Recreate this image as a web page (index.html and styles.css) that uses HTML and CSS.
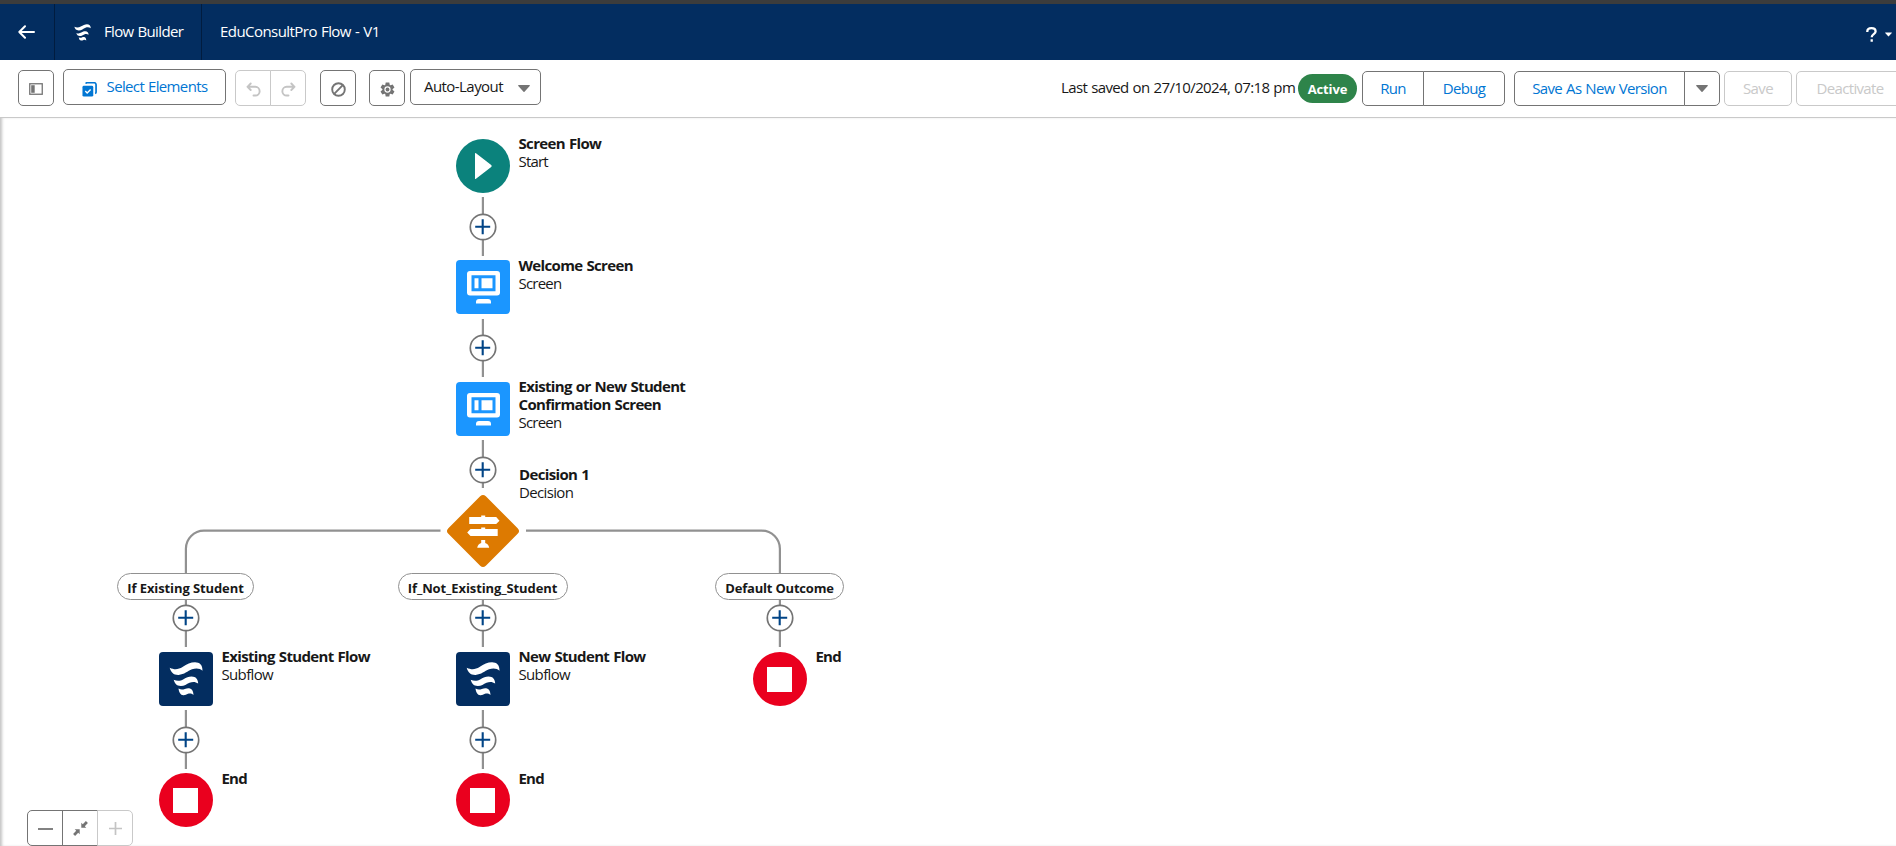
FILE: index.html
```html
<!DOCTYPE html>
<html lang="en">
<head>
<meta charset="utf-8">
<title>Flow Builder</title>
<link rel="stylesheet" href="styles.css">
</head>
<body>
<svg class="defs" aria-hidden="true">
  <symbol id="flow" viewBox="0 0 54 54">
    <path fill="#fff" d="M10.700 15.700C15.500 18 19.500 17.500 23.500 15C28 12.200 31.500 10.300 36 10.300C40.500 10.400 43.500 12.500 43.500 18.700C41 16.300 37 15.900 33 17.300C28.500 19 25.500 22.600 19.500 22.900C14.500 23 12 20.500 10.700 15.700z"/>
    <path fill="#fff" d="M14.700 27.800C18.500 29.500 21.500 29 24.500 27.200C27.500 25.400 29.500 24.400 32.500 24.400C37 24.500 39 27 39.200 31.600C36.500 29.600 33.500 29.600 30.500 30.800C27.500 32.200 25.500 34 21.800 34C17.500 33.900 15.700 31.600 14.700 27.800z"/>
    <path fill="#fff" d="M19.500 36.500C22 37.900 23.800 37.700 25.800 36.900C27.500 36.300 28.500 36.100 30 36.200C33 36.500 34.300 39 34.500 43C32.500 41.300 30.800 41.200 29 41.800C27.300 42.500 26.300 43.300 24.300 43.200C21.500 43 20 40.500 19.500 36.500z"/>
  </symbol>
  <symbol id="screen" viewBox="0 0 54 54">
    <path fill="#fff" fill-rule="evenodd" d="M14 11h27a3 3 0 0 1 3 3v18.500a3 3 0 0 1-3 3H14a3 3 0 0 1-3-3V14a3 3 0 0 1 3-3zm1.500 4.200v16h24v-16zM18.500 18.200h4v10h-4zM25.500 18.200h11v10h-11zM23 39h9a3 3 0 0 1 3 3v1.500H20V42a3 3 0 0 1 3-3z"/>
  </symbol>
  <symbol id="plus" viewBox="0 0 28 28">
    <circle cx="14" cy="14" r="12.700" fill="#fff" stroke="#747474" stroke-width="1.700"/>
    <path d="M13.700 6.200v15M6.200 13.700h15" stroke="#014486" stroke-width="2.100"/>
  </symbol>
  <symbol id="caret" viewBox="0 0 12 7"><path d="M.8 0h10.400a.6.600 0 0 1 .5 1L6.500 6.700a.7.700 0 0 1-1 0L.3 1A.6.600 0 0 1 .8 0z" fill="currentColor"/></symbol>
</svg>

<header class="topbar">
  <div class="back"><svg width="18" height="14" viewBox="0 0 18 14" fill="none" stroke="#fff" stroke-width="2" stroke-linecap="round" stroke-linejoin="round"><path d="M7 1.200 1.300 7 7 12.800M1.300 7H16"/></svg></div>
  <div class="brand"><svg width="27" height="27"><use href="#flow"/></svg><span>Flow Builder</span></div>
  <div class="title"><span>EduConsultPro Flow - V1</span></div>
  <div class="help"><svg width="11" height="15" viewBox="0 0 11 15" fill="none" stroke="#fff" stroke-width="2.300"><path d="M1.300 5V4.600C1.300 2.500 3 1.200 5.400 1.200s4.200 1.300 4.200 3.300c0 2.700-3.900 2.700-3.900 5.700M5.700 12.300v2.500"/></svg><svg width="7" height="5"><use href="#caret"/></svg></div>
</header>

<nav class="toolbar">
  <div class="tools">
    <button class="btn icon panel"><svg width="14" height="12" viewBox="0 0 14 12"><rect x=".75" y=".75" width="12.500" height="10.500" fill="none" stroke="#747474" stroke-width="1.300"/><path d="M2.200 2.200h3.500v7.600H2.200z" fill="#747474"/></svg></button>
    <button class="btn select"><svg width="15" height="15" viewBox="0 0 16 16"><path d="M4 1.700A1.500 1.500 0 0 1 5.500.8H13a2 2 0 0 1 2 2v8a1.500 1.500 0 0 1-1 1.500" fill="none" stroke="#0176d3" stroke-width="1.800"/><rect x=".5" y="4" width="11.500" height="11.500" rx="1.500" fill="#0176d3"/><path d="m3.500 9.700 2 2 3.700-3.700" fill="none" stroke="#fff" stroke-width="1.500"/></svg><span>Select Elements</span></button>
    <div class="group disabled undo">
      <button class="btn icon"><svg width="15" height="15" viewBox="0 0 15 15" fill="none" stroke="#c4c4c4" stroke-width="1.900" stroke-linecap="round" stroke-linejoin="round"><path d="M4.700 1.500 1.500 4.800 4.700 8M1.500 4.800h7.800a4.300 4.300 0 0 1 0 8.700H7.500"/></svg></button>
      <button class="btn icon"><svg width="15" height="15" viewBox="0 0 15 15" fill="none" stroke="#c4c4c4" stroke-width="1.900" stroke-linecap="round" stroke-linejoin="round"><path d="m10.300 1.500 3.200 3.300L10.300 8M13.500 4.800H5.700a4.300 4.300 0 0 0 0 8.700h1.800"/></svg></button>
    </div>
    <button class="btn icon ban"><svg width="15" height="15" viewBox="0 0 15 15" fill="none" stroke="#747474" stroke-width="1.900"><circle cx="7.500" cy="7.500" r="6.300"/><path d="M3.200 11.800 11.800 3.200"/></svg></button>
    <button class="btn icon gear"><svg width="15" height="15" viewBox="0 0 15 15"><g fill="#747474"><path d="M5.700.5h3.600l.7 3.700H5zM5 10.800h5l-.7 3.700H5.700z"/><path d="M5.700.5h3.600l.7 3.700H5zM5 10.800h5l-.7 3.700H5.700z" transform="rotate(60 7.500 7.500)"/><path d="M5.700.5h3.600l.7 3.700H5zM5 10.800h5l-.7 3.700H5.700z" transform="rotate(120 7.500 7.500)"/></g><circle cx="7.500" cy="7.500" r="4" fill="#fff" stroke="#747474" stroke-width="1.700"/><circle cx="7.500" cy="7.500" r="1.900" fill="#747474"/></svg></button>
    <button class="btn combo"><span>Auto-Layout</span><svg class="caret" width="12" height="7"><use href="#caret"/></svg></button>
  </div>
  <div class="actions">
    <span class="saved">Last saved on 27/10/2024, 07:18 pm</span>
    <span class="badge">Active</span>
    <div class="group run"><button class="btn link w-run">Run</button><button class="btn link w-debug">Debug</button></div>
    <div class="group save-as"><button class="btn link w-version">Save As New Version</button><button class="btn w-more"><svg class="caret" width="12" height="7"><use href="#caret"/></svg></button></div>
    <button class="btn off w-save">Save</button>
    <button class="btn off w-deactivate">Deactivate</button>
  </div>
</nav>

<main class="canvas">
  <svg class="wires" width="900" height="728" viewBox="0 118 900 728" fill="none" stroke="#919191" stroke-width="2.200">
    <path d="M482.900 197v59M482.900 319v58M482.900 440v48M482.900 600v47M482.900 710v59M185.900 600v47M185.900 710v59M779.900 600v47M440.500 530.700H203.900a18 18 0 0 0-18 18V573M526 530.700h235.900a18 18 0 0 1 18 18V573"/>
  </svg>
  <div class="node start"><svg class="shape circle" viewBox="0 0 54 54"><path d="M19 14.800v24.600q0 1.200 1 .4l15.200-11.700q1.100-1 0-2L20 14.300q-1-.7-1 .5z" fill="#fff"/></svg><div class="label"><b>Screen Flow</b><span class="tight">Start</span></div></div>
  <div class="node welcome"><svg class="shape"><use href="#screen"/></svg><div class="label"><b>Welcome Screen</b><span class="tight">Screen</span></div></div>
  <div class="node confirm"><svg class="shape"><use href="#screen"/></svg><div class="label"><b>Existing or New Student</b><b>Confirmation Screen</b><span class="tight">Screen</span></div></div>
  <svg class="diamond" width="74" height="74" viewBox="0 0 74 74"><rect x="10.500" y="10.500" width="53" height="53" rx="4" transform="rotate(45 37 37)" fill="#dd7a01"/><path fill="#fff" d="M23.200 23h12v-1.500h4V23h11l3.300 3.700-3.300 3.300h-27zM24.500 35h10.700v-1.500h4V35h12.500v7H24.500L21.200 38.500zM35.200 46h4v3q3.500 1.200 4 4.800h-12q.5-3.600 4-4.800z"/></svg>
  <div class="label decision"><b>Decision 1</b><span>Decision</span></div>
  <div class="pill p1">If Existing Student</div>
  <div class="pill p2">If_Not_Existing_Student</div>
  <div class="pill p3">Default Outcome</div>
  <div class="node sub1"><svg class="shape navy"><use href="#flow"/></svg><div class="label"><b>Existing Student Flow</b><span>Subflow</span></div></div>
  <div class="node sub2"><svg class="shape navy"><use href="#flow"/></svg><div class="label"><b>New Student Flow</b><span>Subflow</span></div></div>
  <div class="node end1"><div class="shape stop"></div><div class="label"><b class="tight">End</b></div></div>
  <div class="node end2"><div class="shape stop"></div><div class="label"><b class="tight">End</b></div></div>
  <div class="node end3"><div class="shape stop"></div><div class="label"><b class="tight">End</b></div></div>
  <svg class="add a1"><use href="#plus"/></svg>
  <svg class="add a2"><use href="#plus"/></svg>
  <svg class="add a3"><use href="#plus"/></svg>
  <svg class="add a4"><use href="#plus"/></svg>
  <svg class="add a5"><use href="#plus"/></svg>
  <svg class="add a6"><use href="#plus"/></svg>
  <svg class="add a7"><use href="#plus"/></svg>
  <svg class="add a8"><use href="#plus"/></svg>
  <div class="zoom group">
    <button class="btn"><svg width="15" height="15" stroke="#747474" stroke-width="1.800"><path d="M0 8h15"/></svg></button>
    <button class="btn"><svg width="15" height="15" viewBox="0 0 15 15" fill="#747474"><path d="M8.300 1.700 9.800 3.200 12.900.1l2 2L11.800 5.200l1.500 1.500h-5zM6.700 8.300v5L5.200 11.800l-3.100 3.100-2-2L3.200 9.800 1.700 8.300z"/></svg></button>
    <button class="btn"><svg width="15" height="15" stroke="#c4c4c4" stroke-width="1.700"><path d="M1 7.500h13M7.500 1v13"/></svg></button>
  </div>
</main>
</body>
</html>
```
FILE: styles.css
```css
* { box-sizing: border-box; }
body { margin: 0; width: 1896px; height: 846px; overflow: hidden; background: #fff; color: #181818; font: 15px/18px "Open Sans", "Noto Sans", sans-serif; letter-spacing: -.65px; word-spacing: .7px; }
button { font: inherit; color: inherit; letter-spacing: inherit; word-spacing: inherit; }
.defs { display: none; }

/* Header */
.topbar { height: 60px; border-top: 4px solid #3c3c3c; background: #032d60; color: #fff; display: flex; align-items: stretch; }
.topbar > div { display: flex; align-items: center; }
.topbar span { padding-bottom: 2px; }
.back { width: 55px; padding-left: 18px; border-right: 1px solid #011c3f; }
.brand { width: 147px; padding-left: 14px; gap: 8px; border-right: 1px solid #011c3f; }
.brand svg { flex: none; }
.title { padding-left: 18px; flex: 1; letter-spacing: -.55px; }
.topbar .help { padding: 4px 4px 0 0; gap: 8px; }

/* Toolbar */
.toolbar { height: 58px; border-bottom: 1px solid #c9c9c9; display: flex; justify-content: space-between; }
.tools, .actions { display: flex; align-items: flex-start; flex: none; }
.btn { height: 36px; padding: 0; border: 1px solid #747474; border-radius: 5px; background: #fff; display: flex; align-items: center; justify-content: center; flex: none; white-space: nowrap; }
.icon { width: 36px; margin-top: 10px; padding-top: 2px; }
.group { display: flex; flex: none; }
.group .btn { border-radius: 0; }
.group .btn + .btn { margin-left: -1px; }
.group .btn:first-child { border-radius: 5px 0 0 5px; }
.group .btn:last-child { border-radius: 0 5px 5px 0; }
.disabled .btn { border-color: #c9c9c9; }
.panel { margin-left: 18px; }
.select { width: 163px; margin: 9px 0 0 9px; gap: 10px; color: #0176d3; }
.select svg { margin-top: 4px; }
.select span, .combo span { padding-bottom: 2px; }
.undo { margin-left: 9px; }
.ban { margin-left: 14px; }
.gear { margin-left: 13px; }
.combo { width: 131px; margin: 9px 0 0 5px; gap: 15px; padding-left: 3px; letter-spacing: -.55px; }
.combo .caret { margin-top: 3px; }
.caret { color: #747474; }
.actions { width: 835px; }
.actions .btn { height: 35px; padding-bottom: 1px; }
.saved { margin-top: 18px; width: 237px; flex: none; white-space: nowrap; letter-spacing: -.62px; }
.badge { width: 59px; height: 29px; flex: none; margin-top: 14px; padding-top: 1px; border-radius: 15px; background: #2e844a; color: #fff; font-size: 13px; font-weight: 700; letter-spacing: -.1px; display: flex; align-items: center; justify-content: center; }
.run { margin: 11px 0 0 5px; }
.save-as { margin: 11px 0 0 9px; }
.link { color: #0176d3; }
.w-run { width: 62px; }
.w-debug { width: 82px; }
.w-version { width: 171px; }
.w-more { width: 36px; }
.off { color: #c9c9c9; border-color: #c9c9c9; margin-top: 11px; }
.w-save { width: 68px; margin-left: 4px; }
.w-deactivate { width: 108px; margin-left: 4px; }

/* Flow canvas */
.canvas { position: relative; height: 728px; box-shadow: inset 3px 0 3px -1px #c4c4c4; }
.wires { position: absolute; left: 0; top: 0; }
.node { position: absolute; display: flex; gap: 9px; }
.shape { width: 54px; height: 54px; border-radius: 4px; background: #1b96ff; flex: none; margin-top: 5px; }
.circle { border-radius: 50%; background: #0b827c; }
.navy { background: #032d60; }
.stop { border-radius: 50%; background: #ea001e; display: grid; place-items: center; }
.stop::before { content: ""; width: 25px; height: 25px; background: #fff; }
.label { display: flex; flex-direction: column; white-space: nowrap; }
.label b { font-weight: 700; }
.label .tight { letter-spacing: -.8px; }
.start { left: 455.500px; top: 16px; }
.welcome { left: 455.500px; top: 138px; }
.welcome .shape { margin-top: 4px; }
.confirm { left: 455.500px; top: 259px; }
.diamond { position: absolute; left: 446px; top: 376px; }
.decision { position: absolute; left: 519px; top: 347px; }
.sub1 { left: 158.500px; top: 529px; }
.sub2 { left: 455.500px; top: 529px; }
.end1 { left: 752.500px; top: 529px; }
.end2 { left: 158.500px; top: 651px; }
.end3 { left: 455.500px; top: 651px; }
.end2 .shape, .end3 .shape { margin-top: 4px; }
.pill { position: absolute; top: 455px; height: 27px; border: 1px solid #919191; border-radius: 14px; background: #fff; font-size: 13px; font-weight: 700; letter-spacing: -.1px; word-spacing: 0; display: flex; align-items: center; justify-content: center; padding-top: 2px; white-space: nowrap; }
.p1 { left: 117px; width: 137px; }
.p2 { left: 397.500px; width: 170px; }
.p3 { left: 715px; width: 129px; letter-spacing: -.2px; }
.add { position: absolute; width: 28px; height: 28px; left: 469px; }
.a1 { top: 95px; }
.a2 { top: 216px; }
.a3 { top: 338px; }
.a4 { top: 486px; }
.a5 { top: 608px; }
.a6 { top: 486px; left: 172px; }
.a7 { top: 608px; left: 172px; }
.a8 { top: 486px; left: 766px; }
.zoom { position: absolute; left: 27px; top: 692px; }
.zoom .btn { width: 36px; }
.zoom .btn:last-child { border-color: #c9c9c9; }
```
